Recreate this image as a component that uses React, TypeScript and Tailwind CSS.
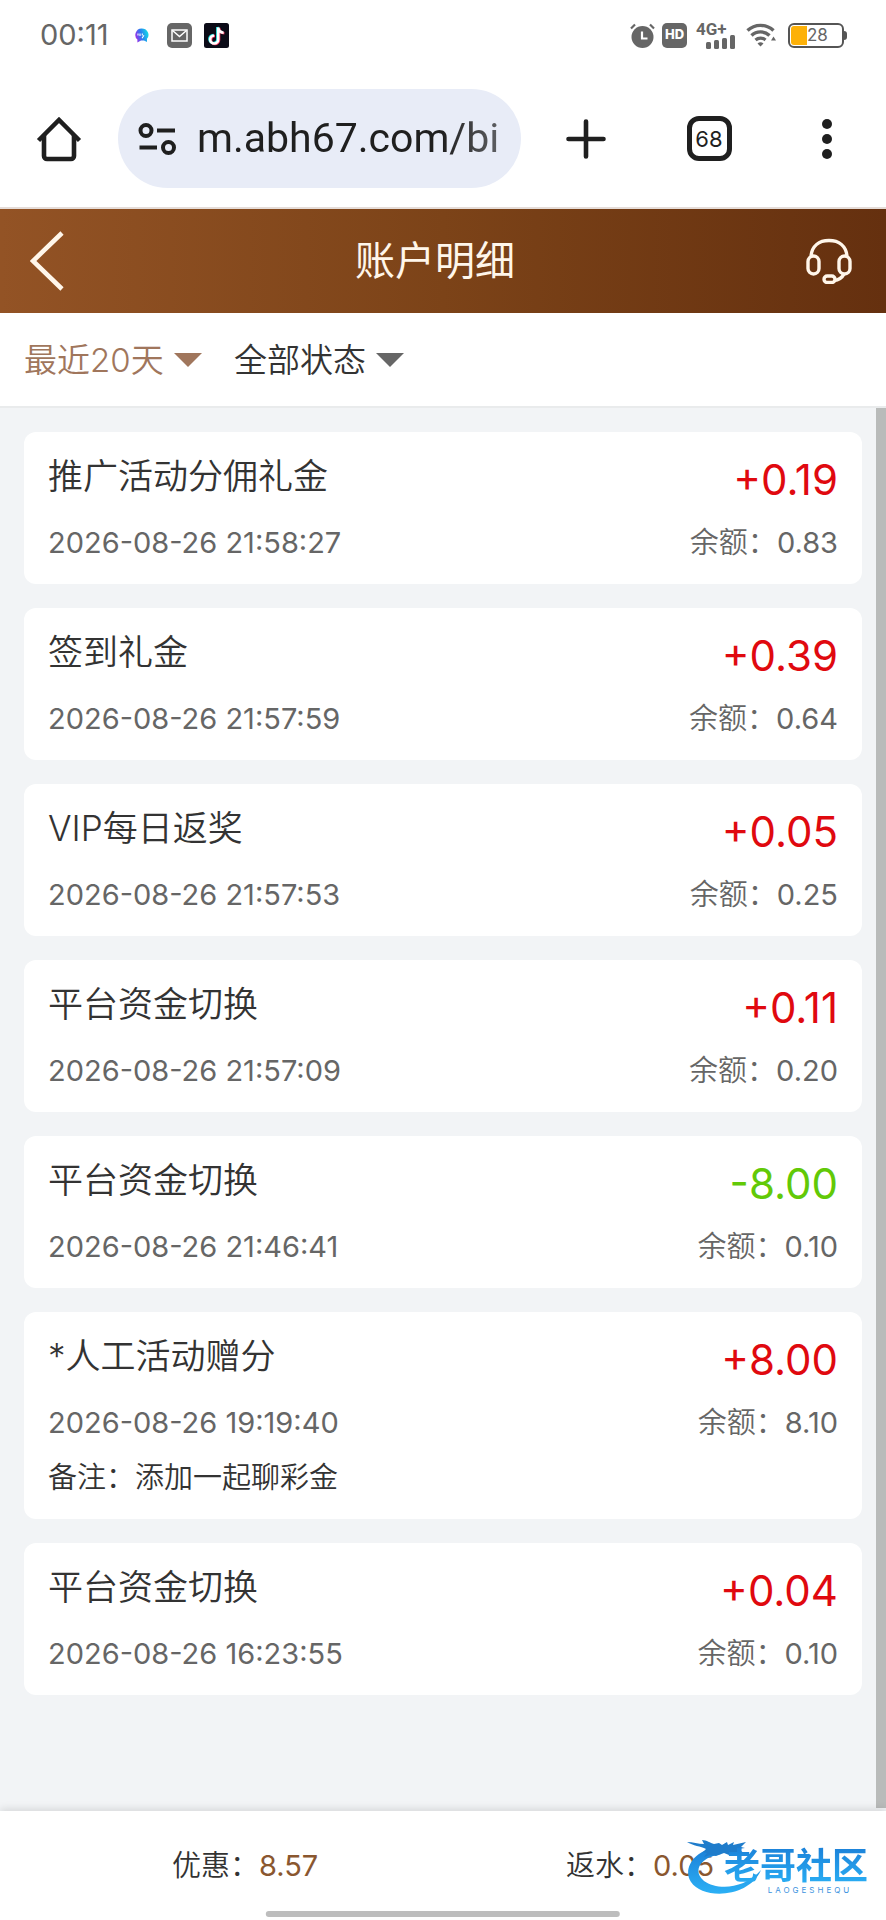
type RecordItem = {
  title: string;
  time: string;
  amount: string;
  balance: string;
  remark?: string;
};

const records: RecordItem[] = [
  { title: "推广活动分佣礼金", time: "2026-08-26 21:58:27", amount: "+0.19", balance: "0.83" },
  { title: "签到礼金", time: "2026-08-26 21:57:59", amount: "+0.39", balance: "0.64" },
  { title: "VIP每日返奖", time: "2026-08-26 21:57:53", amount: "+0.05", balance: "0.25" },
  { title: "平台资金切换", time: "2026-08-26 21:57:09", amount: "+0.11", balance: "0.20" },
  { title: "平台资金切换", time: "2026-08-26 21:46:41", amount: "-8.00", balance: "0.10" },
  {
    title: "*人工活动赠分",
    time: "2026-08-26 19:19:40",
    amount: "+8.00",
    balance: "8.10",
    remark: "添加一起聊彩金",
  },
  { title: "平台资金切换", time: "2026-08-26 16:23:55", amount: "+0.04", balance: "0.10" },
];

const StatusBar = () => {
  return (
    <div className="flex h-[70px] items-center justify-between pl-10 pr-[39px] text-[#666]">
      <div className="flex items-center">
        <span className="w-[94px] text-[29px] font-normal">00:11</span>
        {/* chat bubble */}
        <svg className="mr-[18px] size-[15px]" viewBox="0 0 15 15">
          <defs>
            <linearGradient id="bubble" x1="0" y1="0.6" x2="1" y2="0.3">
              <stop offset="0" stopColor="#a02be8" />
              <stop offset="0.45" stopColor="#2a7cf0" />
              <stop offset="1" stopColor="#12dfe6" />
            </linearGradient>
          </defs>
          <path d="M7.5 0.5a6.8 6.3 0 0 1 5.5 10.2v3.3l-3-1.6H7l-3.6 2v-2.8A6.4 6.4 0 0 1 7.5 0.5z" fill="url(#bubble)" />
          <path d="M4 5.5v2M6 5.5v2.5M8.3 5.5v2M10 7.2l-2 3" stroke="#fff" strokeWidth="1.1" />
        </svg>
        {/* mail */}
        <svg className="mr-3 size-[25px]" viewBox="0 0 25 25" fill="none">
          <rect width="25" height="25" rx="5" fill="#666" />
          <rect x="5" y="7" width="15" height="11" stroke="#fff" strokeWidth="1.5" />
          <path d="M5.5 7.5l7 6 7-6" stroke="#fff" strokeWidth="1.5" />
        </svg>
        {/* tiktok */}
        <svg className="size-[25px]" viewBox="0 0 25 25" fill="none" strokeWidth="2.6">
          <rect width="25" height="25" rx="2.5" fill="#0b0b17" />
          <path d="M13.4 4v12a4 4 0 1 1-4-4M13.4 4c.3 3 2.2 5 5.4 5.2" stroke="#25e3e0" />
          <path d="M15 5v12a4 4 0 1 1-4-4M15 5c.3 3 2.2 5 5.4 5.2" stroke="#f6315b" />
          <path d="M14.2 4.5v12a4 4 0 1 1-4-4M14.2 4.5c.3 3 2.2 5 5.4 5.2" stroke="#fff" />
        </svg>
      </div>

      <div className="flex items-center">
        {/* alarm */}
        <svg className="mr-[7px] h-[25px] w-[25px]" viewBox="0 0 25 25" fill="none">
          <circle cx="12.5" cy="14" r="11" fill="#666" />
          <path d="M1 5.5L5 1.5M24 5.5L20 1.5" stroke="#666" strokeWidth="2.2" />
          <path d="M12 8.5V15.5H17.5" stroke="#fff" strokeWidth="2.2" />
        </svg>
        <span className="mr-[9px] flex h-[25px] w-[25px] items-center justify-center rounded-[5px] bg-[#666] text-[13px] font-extrabold text-white">
          HD
        </span>
        <div className="mr-[11px] flex h-[27px] w-[39px] flex-col">
          <span className="h-[13px] font-[Roboto] text-[17px] leading-[14px] font-bold">4G+</span>
          <svg className="h-[14px] w-[39px]" viewBox="0 0 39 14" fill="#666">
            <rect x="10" y="7" width="5" height="7" rx="1.5" />
            <rect x="18" y="5" width="5" height="9" rx="1.5" />
            <rect x="26" y="3" width="5" height="11" rx="1.5" />
            <rect x="34" y="0" width="5" height="14" rx="1.5" />
          </svg>
        </div>
        {/* wifi */}
        <svg className="mr-3 h-[24px] w-[30px]" viewBox="0 0 30 24" fill="none" stroke="#666">
          <path d="M1.5 7.5a19 19 0 0 1 26 0" strokeWidth="3.4" />
          <path d="M5.5 12.5a13 13 0 0 1 18 0" strokeWidth="3.4" />
          <path d="M9.5 17a7.5 7.5 0 0 1 10 0" strokeWidth="3.2" />
          <path d="M11.5 20.5a4.5 4.5 0 0 1 6 0L14.5 23.5z" fill="#666" stroke="none" />
          <path d="M25 17.5l2.5-4 2.5 4z" fill="#666" stroke="none" />
        </svg>
        {/* battery */}
        <div className="flex items-center">
          <div className="flex h-[25px] w-[56px] items-center rounded-[6px] border-2 border-[#555] p-px">
            <span className="h-full w-4 rounded-l-[3px] bg-[#fdb108]" />
            <span className="text-[17px] leading-none font-normal">28</span>
          </div>
          <span className="h-[9px] w-[3px] rounded-r-sm bg-[#555]" />
        </div>
      </div>
    </div>
  );
};

const BrowserBar = () => {
  return (
    <div className="flex h-[137px] items-center text-[#1f1f1f]">
      <button aria-label="home" className="flex w-[118px] justify-center">
        <svg className="h-[46px] w-[46px]" viewBox="0 0 46 46" fill="none" stroke="currentColor">
          <path d="M2.5 24.5L23 4L43.5 24.5" strokeWidth="4.5" />
          <path d="M8 19V40a3 3 0 0 0 3 3H35a3 3 0 0 0 3-3V19" strokeWidth="4.6" />
        </svg>
      </button>
      <div className="flex h-[99px] min-w-0 flex-1 items-center gap-5 rounded-full bg-[#e8ecf7] pl-5 pr-[18px]">
        <svg className="h-[34px] w-[39px] shrink-0" viewBox="0 0 39 34" fill="none" stroke="currentColor" strokeWidth="4">
          <circle cx="8" cy="8.5" r="5.5" />
          <path d="M19 8.5H37M1.5 25.5H19" />
          <circle cx="30.5" cy="25.5" r="5.5" />
        </svg>
        <input
          aria-label="address"
          readOnly
          value="m.abh67.com/bi"
          className="w-full min-w-0 bg-transparent font-[Roboto] text-[41px] font-normal outline-none mask-r-from-80% mask-r-to-[140%]"
        />
      </div>
      <button aria-label="new tab" className="flex w-[129px] justify-center">
        <svg className="size-10" viewBox="0 0 40 40" stroke="currentColor" strokeWidth="4.6" strokeLinecap="round">
          <path d="M20 2.5V37.5M2.5 20H37.5" />
        </svg>
      </button>
      <button className="flex w-[118px] justify-center">
        <span className="flex size-[45px] items-center justify-center rounded-[12px] border-[5px] border-[#1f1f1f] text-[22px] leading-none font-normal">
          68
        </span>
      </button>
      <button aria-label="menu" className="flex w-[118px] flex-col items-center gap-[5px]">
        <span className="size-[10px] rounded-full bg-[#1f1f1f]" />
        <span className="size-[10px] rounded-full bg-[#1f1f1f]" />
        <span className="size-[10px] rounded-full bg-[#1f1f1f]" />
      </button>
    </div>
  );
};

const Filter = ({ name, text, color, arrow }: { name: string; text: string; color: string; arrow: string }) => {
  return (
    <label className={`flex items-center gap-[10px] ${color}`}>
      <select aria-label={name} className="appearance-none bg-transparent text-[33px] leading-[48px] outline-none">
        <option>{text}</option>
      </select>
      <svg className={`h-[14px] w-[28px] ${arrow}`} viewBox="0 0 28 14" fill="currentColor">
        <path d="M0 0H28L14 14z" />
      </svg>
    </label>
  );
};

const RecordCard = ({ item }: { item: RecordItem }) => {
  return (
    <li className="rounded-[12px] bg-white px-6 pt-[15px] pb-[14px] text-[29px] leading-[55px] text-[#666]">
      <div className="mb-3 flex h-14 justify-between leading-[58px]">
        <span className="text-[35px] text-[#333]">{item.title}</span>
        <span
          className={`text-[42px] leading-[66px] font-normal ${item.amount.startsWith("-") ? "text-[#62c907]" : "text-[#e0090f]"}`}>
          {item.amount}
        </span>
      </div>
      <div className="flex justify-between">
        <span className="font-normal">{item.time}</span>
        <span>
          余额：<span className="font-normal">{item.balance}</span>
        </span>
      </div>
      {item.remark && <p className="text-[#333]">备注：{item.remark}</p>}
    </li>
  );
};

const Watermark = () => {
  return (
    <div className="absolute right-[18px] bottom-[26px] flex items-end">
      <svg className="-mr-[39px] h-[56px] w-[76px]" viewBox="0 0 76 56">
        <defs>
          <linearGradient id="dragon" x1="0" y1="0" x2="0" y2="1">
            <stop offset="0" stopColor="#1c80d8" />
            <stop offset="1" stopColor="#2bb0f5" />
          </linearGradient>
        </defs>
        <path d="M32 10C8 10-5 31 4 44C16 62 62 60 74 32C56 52 30 52 17 43C6 34 11 20 34 16z" fill="url(#dragon)" />
        <path
          d="M0 4c6 0 11 2 17 2l-2-4c5 0 8 3 12 4l5-1 3 2 5-3 1 3 6-3-1 3 13-3-5 5 4 1-7 1 6 4-10-1-5 3-5-2-8 3-6-1-6 2 3-4-4-1 3-3C14 8 6 8 0 4z"
          fill="#1f7ccb"
        />
      </svg>
      <div className="flex flex-col items-center">
        <span className="bg-linear-to-b from-[#1c80d8] to-[#2bb0f5] bg-clip-text text-[36px] leading-[40px] font-bold text-transparent">
          老哥社区
        </span>
        <span className="pl-7 text-[8px] leading-[8px] font-normal tracking-[3px] text-[#3b93e0]">LAOGESHEQU</span>
      </div>
    </div>
  );
};

export default function App() {
  return (
    <div className="flex min-h-screen flex-col bg-white font-[Inter,'Noto_Sans_CJK_SC',sans-serif] font-[350]">
      <StatusBar />
      <BrowserBar />

      {/* page header */}
      <header className="flex h-[106px] items-center justify-between border-t-2 border-[#e5dcd8] bg-linear-to-r from-[#935325] via-[#7c4318] to-[#65300f] bg-origin-border pl-[30px] pr-[34px] text-[#fff6ea]">
        <button aria-label="back">
          <svg className="h-[60px] w-[34px]" viewBox="0 0 34 60" fill="none" stroke="currentColor" strokeWidth="4.6">
            <path d="M32 2L3 30L32 58" />
          </svg>
        </button>
        <h1 className="text-[40px] leading-none font-normal">账户明细</h1>
        <button aria-label="service">
          <svg className="size-[46px]" viewBox="0 0 46 46" fill="none" stroke="currentColor" strokeWidth="3.4">
            <path d="M5 18C6 8 13 2.5 23 2.5S40 8 41 18" />
            <rect x="2" y="18" width="11" height="18" rx="5.5" />
            <rect x="33" y="18" width="11" height="18" rx="5.5" />
            <path d="M38 36C36 40 33 42 28 42.5" />
            <rect x="18" y="38" width="11" height="6.5" rx="3.2" />
          </svg>
        </button>
      </header>

      <div className="flex h-[95px] items-center gap-8 border-b-2 border-[#e9ebec] px-6">
        <Filter name="日期" text="最近20天" color="text-[#a0765c]" arrow="text-[#a0765c]" />
        <Filter name="状态" text="全部状态" color="text-[#333]" arrow="text-[#666]" />
      </div>

      {/* records */}
      <main className="relative flex-1 bg-[#f2f4f6] p-6">
        <ul className="flex flex-col gap-6">
          {records.map((item) => (
            <RecordCard key={item.time} item={item} />
          ))}
        </ul>
        <div className="absolute top-0 right-0 bottom-[3px] w-[10px] bg-[#b9bbba]" />
      </main>

      {/* totals */}
      <footer className="relative flex h-[109px] items-center justify-around bg-white px-12 text-[29px] text-[#333] shadow-[0_-2px_8px_rgba(0,0,0,0.12)]">
        <p>
          优惠：<span className="font-normal text-[#8a572f]">8.57</span>
        </p>
        <p>
          返水：<span className="font-normal text-[#8a572f]">0.05</span>
        </p>
        <Watermark />
        <div className="absolute bottom-[3px] left-1/2 h-[6px] w-2/5 -translate-x-1/2 rounded-full bg-[#bdbdbd]" />
      </footer>
    </div>
  );
}
